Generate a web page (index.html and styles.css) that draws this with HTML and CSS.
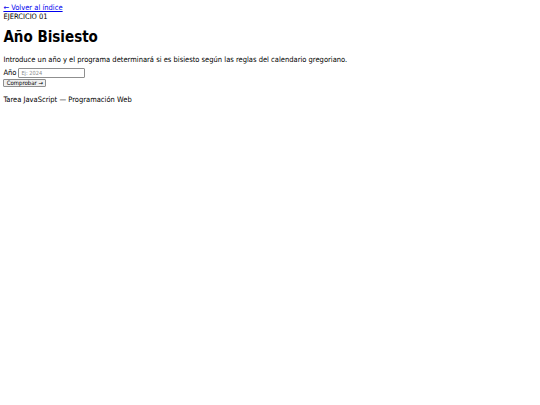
FILE: index.html
```html
<!DOCTYPE html>
<html lang="es">
<head>
<meta charset="utf-8">
<title>Año Bisiesto</title>
<link rel="stylesheet" href="styles.css">
</head>
<body>
<header class="top">
<a class="back" href="#">← Volver al índice</a>
<div class="tag">EJERCICIO 01</div>
<h1 class="title">Año Bisiesto</h1>
<p class="intro">Introduce un año y el programa determinará si es bisiesto según las reglas del calendario gregoriano.</p>
</header>
<main class="form">
<div class="field"><label class="lbl" for="y">Año</label><input class="inp" id="y" type="text" placeholder="Ej: 2024"></div>
<button class="btn" type="button">Comprobar →</button>
</main>
<footer class="foot"><p class="foot-text">Tarea JavaScript — Programación Web</p></footer>
</body>
</html>
```
FILE: styles.css
```css
html { background: #fff; }
body {
  font-family: "DejaVu Sans Condensed", "DejaVu Sans", sans-serif;
  font-size: 7.5px;
  line-height: 9px;
  margin: 3.4px;
  color: #000;
}
.back { color: #0000ee; text-decoration: underline; }
.title {
  font-size: 15px;
  line-height: 15.7px;
  font-weight: bold;
  margin: 8.9px 0 8.7px;
}
.intro { margin: 8.7px 0 0; }
.field {
  display: flex;
  align-items: center;
  gap: 2px;
  margin-top: 4.5px;
  height: 9.6px;
}
.lbl { line-height: 9px; }
.inp {
  box-sizing: border-box;
  width: 67px;
  height: 9.6px;
  margin: 0;
  padding: 0 2px;
  border: 1px solid #8f8f8f;
  border-radius: 1px;
  font-family: "DejaVu Sans Condensed", "DejaVu Sans", sans-serif;
  font-size: 5.6px;
  background: #fff;
}
.inp::placeholder { color: #8a8a8a; }
.btn {
  box-sizing: border-box;
  display: block;
  width: 43px;
  height: 8.4px;
  margin: 1px 0 0;
  padding: 0;
  border: 1px solid #8f8f8f;
  border-radius: 1px;
  background: #efefef;
  font-family: "DejaVu Sans Condensed", "DejaVu Sans", sans-serif;
  font-size: 6px;
  color: #000;
  line-height: 1;
}
.foot-text { margin: 7.9px 0 0; }
```
